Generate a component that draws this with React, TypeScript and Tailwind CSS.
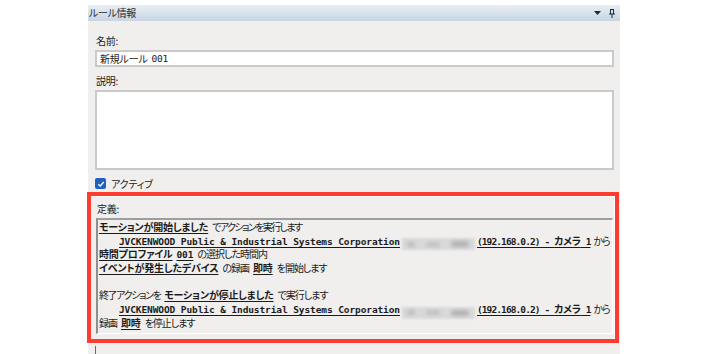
import React from 'react';

const JP = "font-['Noto_Sans_CJK_JP',sans-serif] [font-feature-settings:'palt']";
const MONO = "font-['DejaVu_Sans_Mono','Noto_Sans_CJK_JP',monospace] text-[9.5px]";

function U({ children }: { children: React.ReactNode }) {
  return (
    <span className="font-bold tracking-[-0.2px] underline underline-offset-[1.5px] decoration-[1px]">{children}</span>
  );
}

function M({ children, tight }: { children: React.ReactNode; tight?: boolean }) {
  return <span className={`${MONO} ${tight ? 'tracking-[-0.9px]' : 'tracking-[-0.1px]'}`}>{children}</span>;
}

function Sp({ w = 4 }: { w?: number }) {
  return <span className="inline-block" style={{ width: w }} />;
}

function Blur() {
  return (
    <span className="inline-flex items-center justify-around align-[-2px] w-[73px] h-[12px] mx-[2px] bg-[#d9d9d9] blur-[0.8px]">
      <span className="w-[8px] h-[5px] rounded-full bg-[#bcbcbc] blur-[1.5px]" />
      <span className="w-[14px] h-[5px] rounded-full bg-[#c2c2c2] blur-[1.5px]" />
      <span className="w-[18px] h-[6px] rounded-full bg-[#b3b3b3] blur-[1.5px]" />
    </span>
  );
}

function Line({ children, indent }: { children?: React.ReactNode; indent?: boolean }) {
  return (
    <div className={`h-[13.7px] leading-[13.7px] whitespace-nowrap ${indent ? 'pl-[20px]' : ''}`}>{children}</div>
  );
}

function DeviceLine() {
  return (
    <Line indent>
      <U>
        <M>JVCKENWOOD Public &amp; Industrial Systems Corporation</M>
      </U>
      <Blur />
      <U>
        <M tight>(192.168.0.2) - </M>カメラ<M tight> 1</M>
      </U>
      <Sp w={3} />
      から
    </Line>
  );
}

function Field({ label, children }: { label: string; children: React.ReactNode }) {
  return (
    <div>
      <div className="h-[14px] leading-[14px] pl-[1px]">{label}</div>
      <div className="mt-[2px]">{children}</div>
    </div>
  );
}

export default function App() {
  return (
    <div className={`w-[708px] h-[354px] bg-white overflow-hidden text-[#1b1b1b] ${JP}`}>
      <div className="ml-[88px] w-[532px] h-full pt-[5px] flex flex-col">
        {/* title bar */}
        <div className="h-[16px] flex items-center bg-linear-to-b from-[#e8eef4] to-[#c8d5e3] text-[10px] tracking-[-0.3px] text-[#2b2b2b]">
          <span className="pl-[1px] leading-[16px]">ルール情報</span>
          <div className="ml-auto flex items-center gap-[8px] pr-[5px]">
            <svg width="7" height="4" viewBox="0 0 7 4">
              <path d="M0 0 H7 L3.5 4 Z" fill="#1e2a3a" />
            </svg>
            <svg width="6" height="9" viewBox="0 0 6 9">
              <path d="M1 0.5 H5 M1.5 0.5 V5 M4.5 0.5 V5 M0 5 H6 M3 5 V9" stroke="#1e2a3a" strokeWidth="1" fill="none" />
            </svg>
          </div>
        </div>

        {/* body */}
        <div className="flex-1 bg-[#f0efed] text-[10px] tracking-[-0.2px]">
          <div className="pl-[7px] pr-[6px] pt-[13px]">
            <Field label="名前:">
              <div className="h-[17px] border-2 border-[#cacaca] bg-white flex items-center pl-[3px] leading-none">
                新規ルール<Sp w={4} />
                <span className="font-['DejaVu_Sans_Mono',monospace] text-[9.5px]">001</span>
              </div>
            </Field>
            <div className="mt-[7px]">
              <Field label="説明:">
                <div className="h-[80px] border-2 border-[#cacaca] bg-white" />
              </Field>
            </div>
            <div className="mt-[7px] h-[13px] flex items-center gap-[5px]">
              <span className="w-[11px] h-[11px] rounded-[2px] bg-[#1f60c0] flex items-center justify-center">
                <svg width="8" height="8" viewBox="0 0 8 8">
                  <path d="M1.3 4.2 L3.2 6 L6.8 2" stroke="white" strokeWidth="1.3" fill="none" />
                </svg>
              </span>
              <span className="leading-[13px]">アクティブ</span>
            </div>
          </div>

          {/* definition (highlighted) */}
          <div className="mt-[2px] -ml-px w-[532px] border-4 border-[#ff3b2f] bg-white">
            <div className="mt-px mr-px bg-[#f0efed] pt-[5px] pb-[5px]">
              <div className="pl-[6px] h-[14px] leading-[14px]">定義:</div>
              <div className="mt-[2px] ml-[5px] mr-[1px] border-t-2 border-l-2 border-t-[#9e9e9e] border-l-[#8f8f8f] border-r border-b border-r-white border-b-white pl-[1px] pb-[3px] tracking-[-1px]">
                <Line>
                  <U>モーションが開始しました</U>
                  <Sp />
                  <span className="tracking-[-1.6px]">でアクションを実行します</span>
                </Line>
                <DeviceLine />
                <Line>
                  <U>
                    時間プロファイル<Sp w={4} />
                    <M>001</M>
                  </U>
                  <Sp />
                  の選択した時間内
                </Line>
                <Line>
                  <U>イベントが発生したデバイス</U>
                  <Sp />
                  の録画
                  <Sp />
                  <U>即時</U>
                  <Sp />
                  を開始します
                </Line>
                <Line />
                <Line>
                  <span className="tracking-[-1.4px]">終了アクションを</span>
                  <Sp />
                  <U>モーションが停止しました</U>
                  <Sp />
                  で実行します
                </Line>
                <DeviceLine />
                <Line>
                  録画
                  <Sp />
                  <U>即時</U>
                  <Sp />
                  を停止します
                </Line>
              </div>
            </div>
          </div>

          <div className="ml-[7px] mt-[3px] w-px h-[12px] bg-[#6b6b6b]" />
        </div>
      </div>
    </div>
  );
}
